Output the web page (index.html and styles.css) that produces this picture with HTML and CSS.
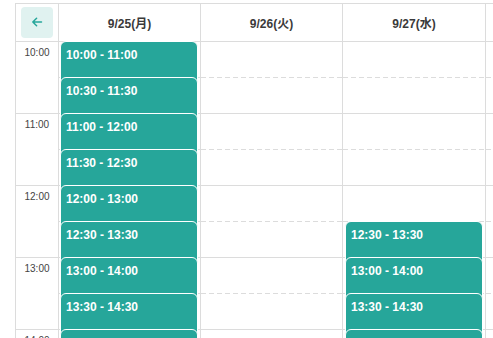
FILE: index.html
```html
<!DOCTYPE html>
<html lang="ja">
<head>
<meta charset="utf-8">
<link rel="stylesheet" href="styles.css">
</head>
<body>
<div class="cal">
  <div class="cell corner"><button class="back" aria-label="戻る"><svg width="12" height="12" viewBox="0 0 12 12"><path d="M10.5 6H1.8M5.6 2.2L1.8 6l3.8 3.8" fill="none" stroke="#26a69a" stroke-width="1.5" stroke-linecap="round" stroke-linejoin="round"/></svg></button></div>
  <div class="cell dayhead">9/25(月)</div>
  <div class="cell dayhead">9/26(火)</div>
  <div class="cell dayhead">9/27(水)</div>
  <div class="cell dayhead"></div>

  <div class="times">
    <div class="hour">10:00</div>
    <div class="hour">11:00</div>
    <div class="hour">12:00</div>
    <div class="hour">13:00</div>
    <div class="hour">14:00</div>
  </div>

  <div class="day">
    <div class="slot half"></div><div class="slot"></div>
    <div class="slot half"></div><div class="slot"></div>
    <div class="slot half"></div><div class="slot"></div>
    <div class="slot half"></div><div class="slot"></div>
    <div class="slot half"></div><div class="slot"></div>
    <div class="event" style="top:0px">10:00 - 11:00</div>
    <div class="event" style="top:36px">10:30 - 11:30</div>
    <div class="event" style="top:72px">11:00 - 12:00</div>
    <div class="event" style="top:108px">11:30 - 12:30</div>
    <div class="event" style="top:144px">12:00 - 13:00</div>
    <div class="event" style="top:180px">12:30 - 13:30</div>
    <div class="event" style="top:216px">13:00 - 14:00</div>
    <div class="event" style="top:252px">13:30 - 14:30</div>
    <div class="event" style="top:288px">14:00 - 15:00</div>
  </div>

  <div class="day">
    <div class="slot half"></div><div class="slot"></div>
    <div class="slot half"></div><div class="slot"></div>
    <div class="slot half"></div><div class="slot"></div>
    <div class="slot half"></div><div class="slot"></div>
    <div class="slot half"></div><div class="slot"></div>
  </div>

  <div class="day day3">
    <div class="slot half"></div><div class="slot"></div>
    <div class="slot half"></div><div class="slot"></div>
    <div class="slot half"></div><div class="slot"></div>
    <div class="slot half"></div><div class="slot"></div>
    <div class="slot half"></div><div class="slot"></div>
    <div class="event" style="top:180px">12:30 - 13:30</div>
    <div class="event" style="top:216px">13:00 - 14:00</div>
    <div class="event" style="top:252px">13:30 - 14:30</div>
    <div class="event" style="top:288px">14:00 - 15:00</div>
  </div>

  <div class="day">
    <div class="slot half"></div><div class="slot"></div>
    <div class="slot half"></div><div class="slot"></div>
    <div class="slot half"></div><div class="slot"></div>
    <div class="slot half"></div><div class="slot"></div>
    <div class="slot half"></div><div class="slot"></div>
  </div>
</div>
</body>
</html>
```
FILE: styles.css
```css
html, body {
  margin: 0;
  padding: 0;
  overflow: hidden;
  background: #fff;
}
body {
  font-family: "Liberation Sans", "Noto Sans CJK JP", sans-serif;
  color: #333;
}
.cal {
  display: grid;
  grid-template-columns: 43px 142px 142px 143px 142px;
  grid-template-rows: 38px auto;
  width: max-content;
  margin: 3px 0 0 15px;
  border-top: 1px solid #dcdcdc;
  border-left: 1px solid #dcdcdc;
}
.cell {
  border-right: 1px solid #dcdcdc;
  border-bottom: 1px solid #dcdcdc;
  display: flex;
  align-items: center;
  justify-content: center;
}
.dayhead {
  font-size: 12px;
  font-weight: 700;
  color: #3a3a3a;
}
.back {
  width: 32px;
  height: 31px;
  margin-top: -1px;
  border: none;
  border-radius: 4px;
  background: #e0f2f0;
  padding: 0;
  display: flex;
  align-items: center;
  justify-content: center;
}
.times {
  display: flex;
  flex-direction: column;
  border-right: 1px solid #dcdcdc;
}
.hour {
  height: 72px;
  box-sizing: border-box;
  border-bottom: 1px solid #dcdcdc;
  font-size: 10px;
  line-height: 12px;
  padding-top: 5px;
  text-align: center;
  color: #444;
}
.day {
  position: relative;
  display: flex;
  flex-direction: column;
  border-right: 1px solid #dcdcdc;
}
.slot {
  height: 36px;
  box-sizing: border-box;
  border-bottom: 1px solid #dcdcdc;
}
.slot.half {
  border-bottom: none;
  background: repeating-linear-gradient(90deg, #dcdcdc 0 5px, transparent 5px 8px) bottom left / 100% 1px no-repeat;
}
.event {
  position: absolute;
  left: 1px;
  width: 138px;
  height: 72px;
  box-sizing: border-box;
  margin-top: -1px;
  background: #26a69a;
  border: 1px solid #fff;
  border-radius: 6px;
  color: #fff;
  font-size: 12px;
  font-weight: 700;
  line-height: 16px;
  padding: 5px 5px 4px;
}
.day3 .event {
  left: 2px;
}
```
